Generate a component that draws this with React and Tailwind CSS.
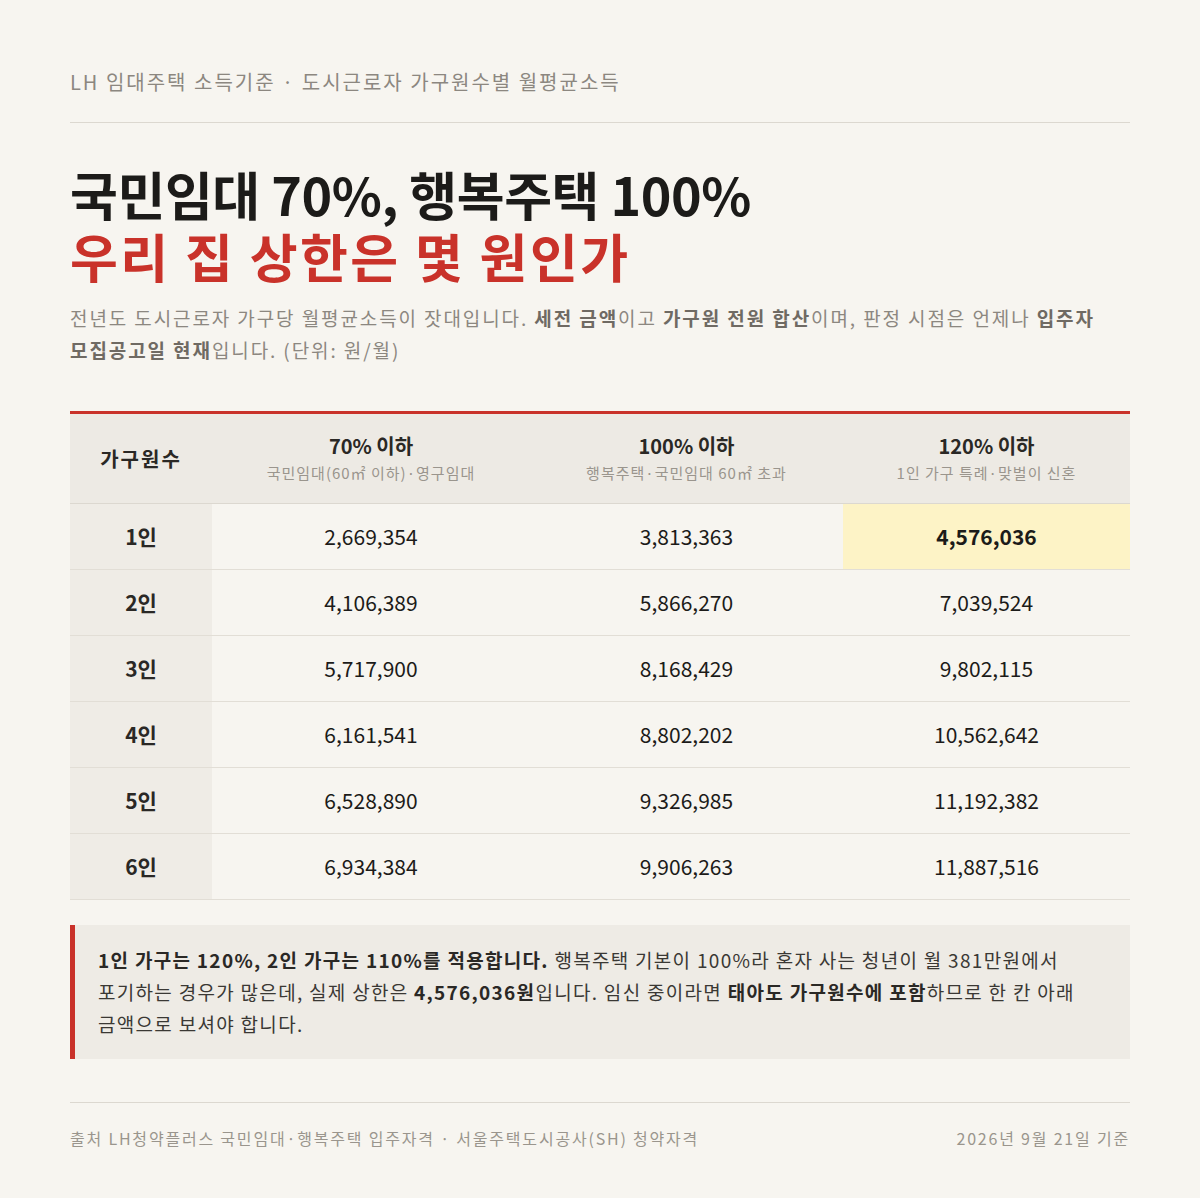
import React from 'react';

const rows = [
  ['1인', '2,669,354', '3,813,363', '4,576,036'],
  ['2인', '4,106,389', '5,866,270', '7,039,524'],
  ['3인', '5,717,900', '8,168,429', '9,802,115'],
  ['4인', '6,161,541', '8,802,202', '10,562,642'],
  ['5인', '6,528,890', '9,326,985', '11,192,382'],
  ['6인', '6,934,384', '9,906,263', '11,887,516'],
];

const cols = [
  { title: '70% 이하', sub: '국민임대(60㎡ 이하)·영구임대' },
  { title: '100% 이하', sub: '행복주택·국민임대 60㎡ 초과' },
  { title: '120% 이하', sub: '1인 가구 특례·맞벌이 신혼' },
];

const App = () => {
  return (
    <div
      className="min-h-[1198px] bg-[#f7f5f0] text-[#1c1b19]"
      style={{ fontFamily: '"Noto Sans CJK KR", "Noto Sans", sans-serif' }}
    >
      <div className="mx-auto w-[1060px] pt-[66px]">
        {/* Eyebrow */}
        <div className="text-[20px] leading-[32px] tracking-[2px] text-[#8c8780] pb-[24px] border-b border-[#dcd8d0]">
          LH 임대주택 소득기준 · 도시근로자 가구원수별 월평균소득
        </div>

        {/* Title */}
        <h1 className="mt-[40px] text-[52px] leading-[62px] font-bold">
          <div className="tracking-[-0.4px]">국민임대 70%, 행복주택 100%</div>
          <div className="text-[#c9322a] tracking-[2.5px]">우리 집 상한은 몇 원인가</div>
        </h1>

        <p className="mt-[15px] text-[19px] leading-[32px] tracking-[1.9px] text-[#8c8780]">
          전년도 도시근로자 가구당 월평균소득이 잣대입니다. <b className="text-[#6f6a63]">세전 금액</b>이고{' '}
          <b className="text-[#6f6a63]">가구원 전원 합산</b>이며, 판정 시점은 언제나{' '}
          <b className="text-[#6f6a63]">입주자</b>
          <br />
          <b className="text-[#6f6a63]">모집공고일 현재</b>입니다. (단위: 원/월)
        </p>

        {/* Table */}
        <div className="mt-[45px] border-t-[3px] border-[#c9322a]">
          <div className="grid grid-cols-[142px_318px_313px_287px] bg-[#edeae4] h-[90px] border-b border-[#dcd8d0]">
            <div className="flex items-center justify-center text-[20px] tracking-[2px] font-bold text-[#2a2825]">
              가구원수
            </div>
            {cols.map((c) => (
              <div key={c.title} className="flex flex-col items-center justify-center">
                <div className="text-[20px] leading-[28px] font-bold text-[#2a2825]">{c.title}</div>
                <div className="text-[15px] leading-[26px] tracking-[1px] text-[#9a958d]">{c.sub}</div>
              </div>
            ))}
          </div>
          {rows.map((r, i) => (
            <div
              key={r[0]}
              className="grid grid-cols-[142px_318px_313px_287px] h-[66px] border-b border-[#e2ded6]"
            >
              <div className="flex items-center justify-center bg-[#efece6] text-[21px] font-bold text-[#2a2825]">
                {r[0]}
              </div>
              <div className="flex items-center justify-center text-[21px] text-[#1c1b19]">{r[1]}</div>
              <div className="flex items-center justify-center text-[21px] text-[#1c1b19]">{r[2]}</div>
              <div
                className={
                  i === 0
                    ? 'flex items-center justify-center text-[21px] font-bold bg-[#fdf3c6] text-[#1c1b19]'
                    : 'flex items-center justify-center text-[21px] text-[#1c1b19]'
                }
              >
                {r[3]}
              </div>
            </div>
          ))}
        </div>

        {/* Callout */}
        <div className="mt-[25px] bg-[#eeebe5] border-l-[5px] border-[#c9322a] pl-[23px] pr-[20px] py-[19px] text-[19px] leading-[32px] tracking-[1.3px] text-[#3a3834] whitespace-nowrap">
          <b className="text-[#2a2825]">1인 가구는 120%, 2인 가구는 110%를 적용합니다.</b> 행복주택 기본이 100%라 혼자 사는
          청년이 월 381만원에서
          <br />
          포기하는 경우가 많은데, 실제 상한은 <b className="text-[#2a2825]">4,576,036원</b>입니다. 임신 중이라면{' '}
          <b className="text-[#2a2825]">태아도 가구원수에 포함</b>하므로 한 칸 아래
          <br />
          금액으로 보셔야 합니다.
        </div>

        {/* Footer */}
        <div className="mt-[43px] border-t border-[#dcd8d0] pt-[22px] flex justify-between text-[16px] leading-[26px] tracking-[1.8px] text-[#9a958d]">
          <span>출처 LH청약플러스 국민임대·행복주택 입주자격 · 서울주택도시공사(SH) 청약자격</span>
          <span>2026년 9월 21일 기준</span>
        </div>
      </div>
    </div>
  );
};

export default App;
